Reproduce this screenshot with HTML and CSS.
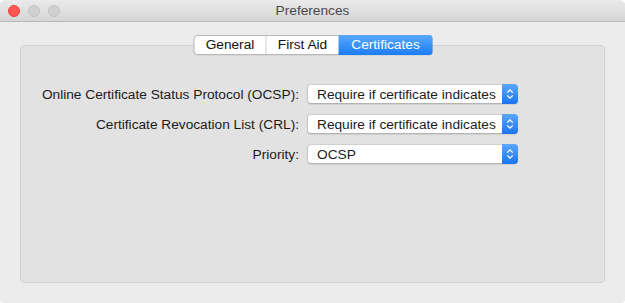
FILE: index.html
```html
<!DOCTYPE html>
<html lang="en">
<head>
    <meta charset="UTF-8">
    <title>Preferences</title>
    <link rel="stylesheet" href="styles.css">
</head>
<body>
    <div class="window">
        <div class="titlebar">
            <div class="lights">
                <span class="light close"></span>
                <span class="light"></span>
                <span class="light"></span>
            </div>
            <div class="title">Preferences</div>
        </div>

        <div class="content">
            <div class="tabs">
                <div class="tab tab-general">General</div>
                <div class="tab tab-firstaid">First Aid</div>
                <div class="tab tab-certs active">Certificates</div>
            </div>

            <div class="panel">
                <div class="form">
                    <label class="label">Online Certificate Status Protocol (OCSP):</label>
                    <div class="popup">
                        <span class="popup-text">Require if certificate indicates</span>
                        <span class="stepper">
                            <svg width="8" height="12" viewBox="0 0 8 12"><path d="M1.2 4.6 L4 1.8 L6.8 4.6 M1.2 7.4 L4 10.2 L6.8 7.4" fill="none" stroke="#fff" stroke-width="1.3"/></svg>
                        </span>
                    </div>

                    <label class="label">Certificate Revocation List (CRL):</label>
                    <div class="popup">
                        <span class="popup-text">Require if certificate indicates</span>
                        <span class="stepper">
                            <svg width="8" height="12" viewBox="0 0 8 12"><path d="M1.2 4.6 L4 1.8 L6.8 4.6 M1.2 7.4 L4 10.2 L6.8 7.4" fill="none" stroke="#fff" stroke-width="1.3"/></svg>
                        </span>
                    </div>

                    <label class="label">Priority:</label>
                    <div class="popup">
                        <span class="popup-text">OCSP</span>
                        <span class="stepper">
                            <svg width="8" height="12" viewBox="0 0 8 12"><path d="M1.2 4.6 L4 1.8 L6.8 4.6 M1.2 7.4 L4 10.2 L6.8 7.4" fill="none" stroke="#fff" stroke-width="1.3"/></svg>
                        </span>
                    </div>
                </div>
            </div>
        </div>
    </div>
</body>
</html>
```

FILE: styles.css
```css
body {
    margin: 0;
    background: #fff;
    font-family: "Liberation Sans", Arial, sans-serif;
    font-size: 13.7px;
    color: #1b1b1b;
}
.window {
    width: 625px;
    height: 303px;
    background: #ececec;
    border-radius: 5px 5px 4px 4px;
    display: flex;
    flex-direction: column;
    overflow: hidden;
}
.titlebar {
    height: 21px;
    border-bottom: 1px solid #b9b9b9;
    background: linear-gradient(#ebebeb, #d5d5d5);
    display: flex;
    align-items: center;
    position: relative;
}
.lights {
    display: flex;
    gap: 8px;
    padding-left: 8px;
}
.light {
    width: 12px;
    height: 12px;
    box-sizing: border-box;
    border-radius: 50%;
    background: #d0d0d0;
    border: 1px solid #c2c2c2;
}
.light.close {
    background: #fc5753;
    border-color: #e5433e;
}
.title {
    position: absolute;
    left: 0;
    right: 0;
    top: 3px;
    text-align: center;
    color: #4a4a4a;
}
.content {
    flex: 1;
    padding: 13px 20px 20px 20px;
    display: flex;
    flex-direction: column;
}
.tabs {
    align-self: center;
    display: flex;
    height: 18px;
    border: 1px solid #b8b8b8;
    border-radius: 4px;
    background: #fff;
    margin-bottom: -10px;
    position: relative;
    z-index: 1;
    box-shadow: 0 1px 0 rgba(0, 0, 0, 0.05);
    transform: translateX(0.5px);
}
.tab {
    line-height: 18px;
    text-align: center;
    color: #111;
}
.tab-general {
    width: 71px;
    border-right: 1px solid #cfcfcf;
}
.tab-firstaid {
    width: 72px;
}
.tab-certs {
    width: 94px;
}
.tab.active {
    background: linear-gradient(#5aa8fc, #1b7df5);
    color: #fff;
    border-radius: 0 3px 3px 0;
    margin: -1px -1px -1px 0;
    line-height: 20px;
}
.panel {
    flex: 1;
    background: #e2e2e2;
    border: 1px solid #d2d2d2;
    border-radius: 4px;
    padding-top: 38px;
}
.form {
    display: grid;
    grid-template-columns: 278px 211px;
    column-gap: 8px;
    row-gap: 10px;
    align-items: center;
}
.label {
    text-align: right;
    white-space: nowrap;
}
.popup {
    height: 18px;
    background: #fff;
    border: 1px solid #c6c6c6;
    border-top-color: #d0d0d0;
    border-bottom-color: #b4b4b4;
    border-radius: 4px;
    display: flex;
    align-items: center;
    box-shadow: 0 0.5px 1px rgba(0, 0, 0, 0.08);
}
.popup-text {
    flex: 1;
    padding-left: 9px;
    white-space: nowrap;
    overflow: hidden;
}
.stepper {
    width: 16px;
    height: 20px;
    margin: -1px -1px -1px 0;
    background: linear-gradient(#5aa8fc, #1b74ee);
    border-radius: 0 4px 4px 0;
    display: flex;
    align-items: center;
    justify-content: center;
}
```
